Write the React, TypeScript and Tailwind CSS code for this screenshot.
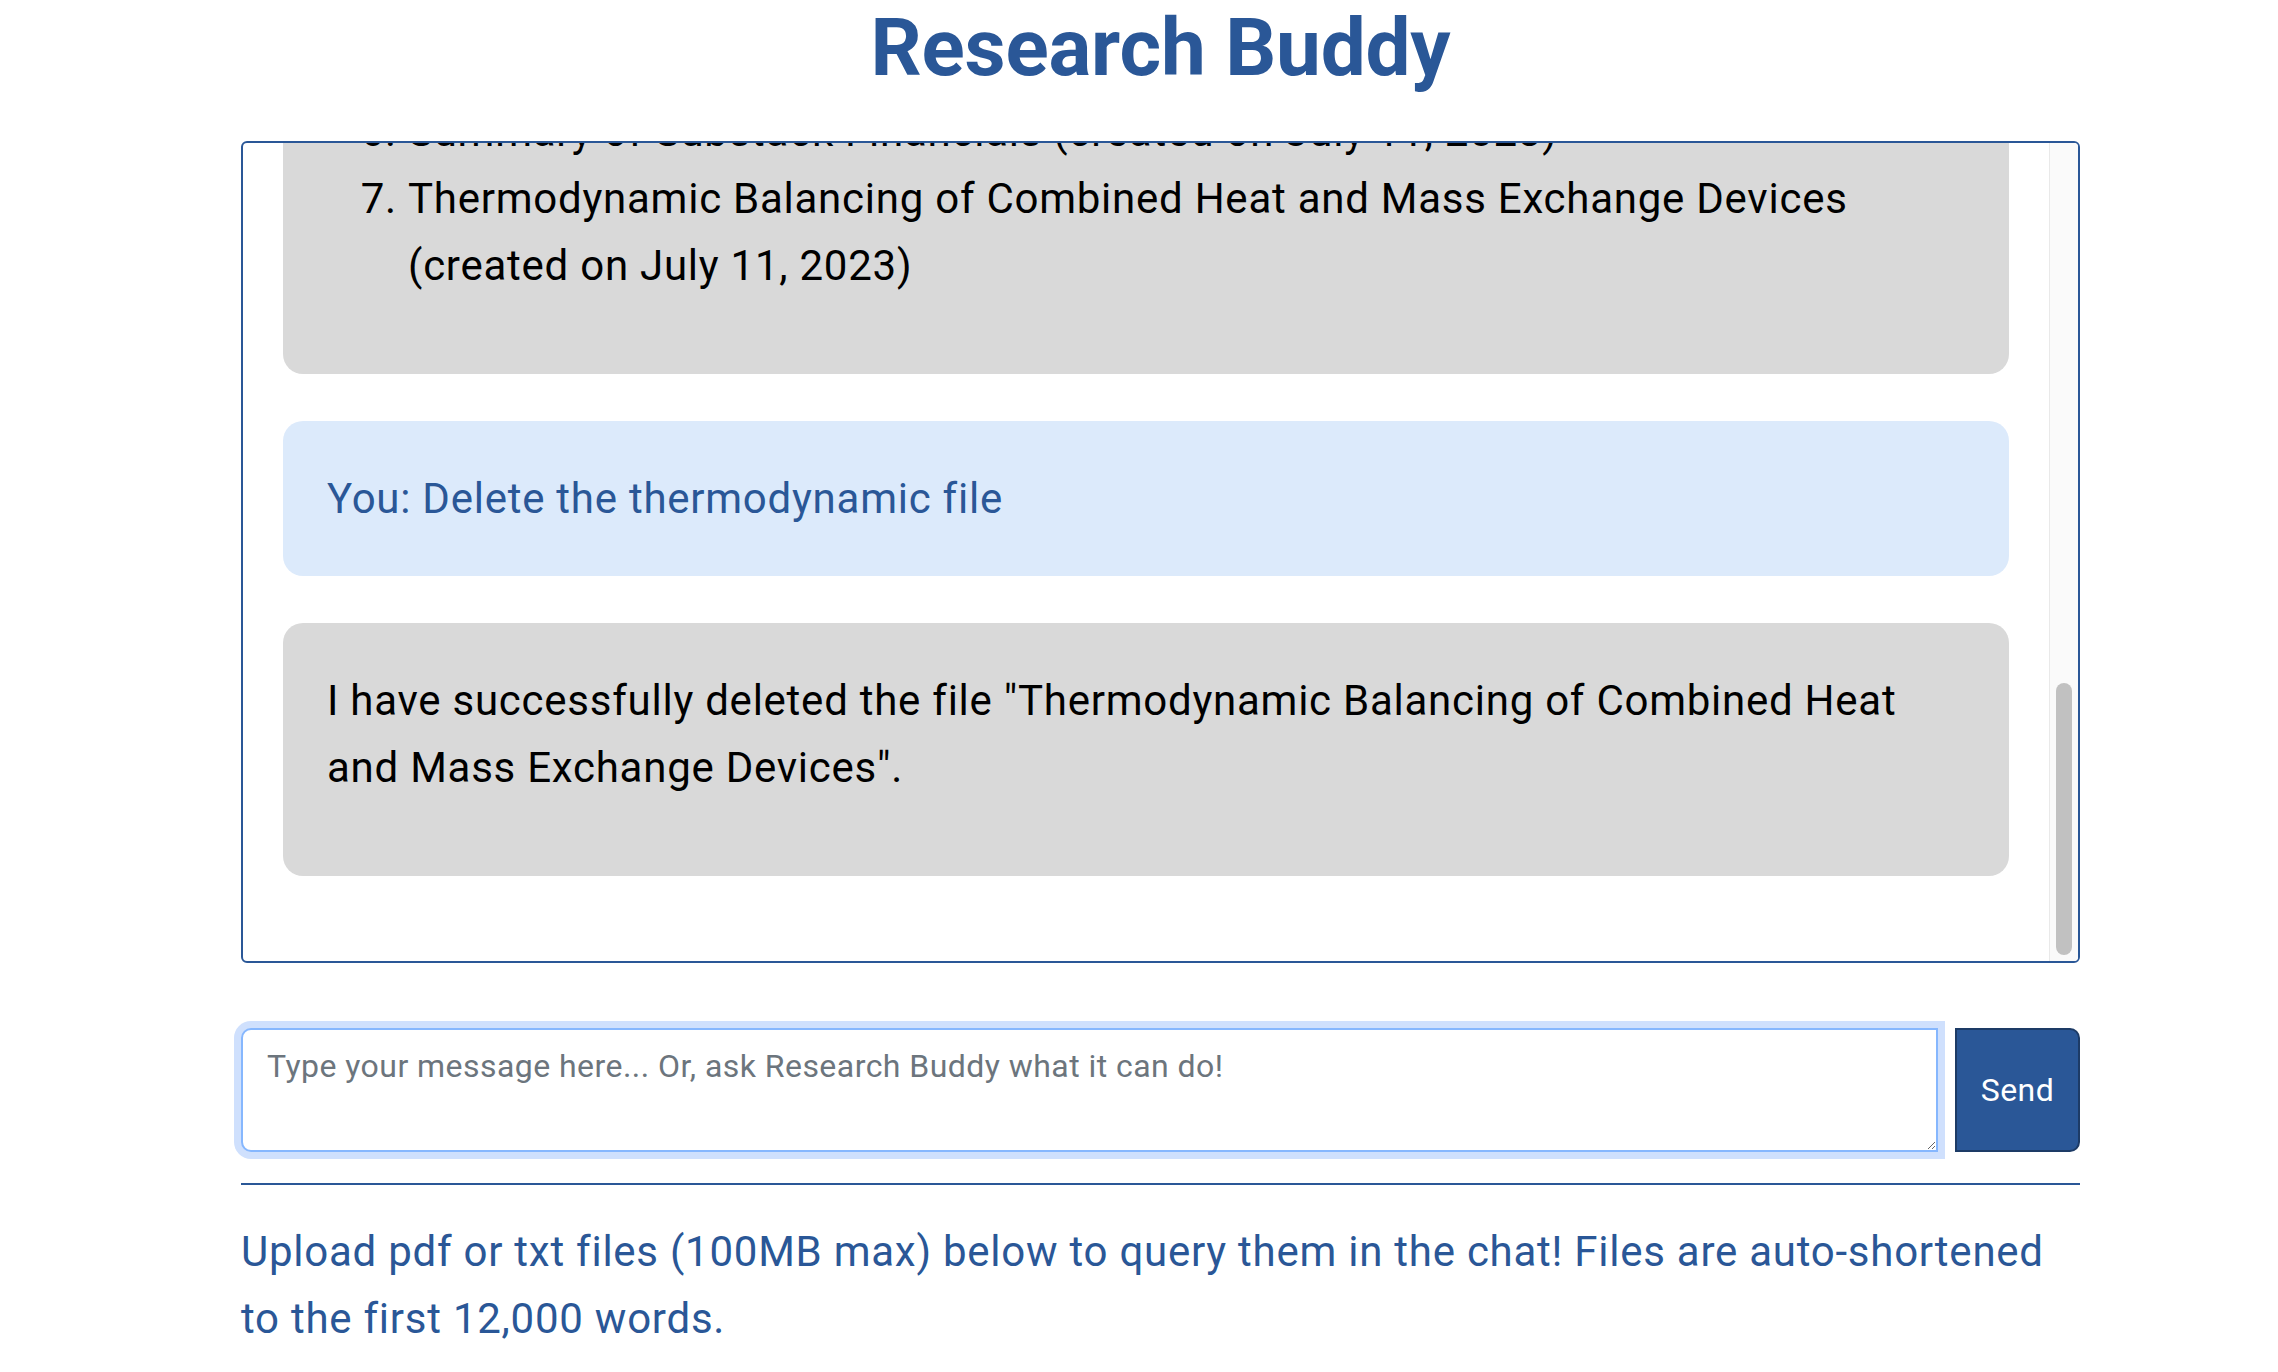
const BLUE = '#2a5797';

const ChatBox = () => {
  return (
    <div className="flex h-[822px] overflow-hidden rounded-[6px] border-2 border-[#2a5797]">
      {/* messages, pinned to the bottom like a scrolled chat */}
      <div className="flex flex-1 flex-col justify-end gap-[47px] overflow-hidden px-[40px] pb-[85px]">
        <div className="shrink-0 rounded-[20px] bg-[#d9d9d9] px-[44px] pt-[44px] pb-[44px] text-[42px] leading-[67px] tracking-[0.75px] text-black">
          <ol start={6} className="mb-[31px] list-decimal pl-[81px]">
            <li>Summary of Substack Financials (created on July 11, 2023)</li>
            <li>
              Thermodynamic Balancing of Combined Heat and Mass Exchange Devices (created on July 11, 2023)
            </li>
          </ol>
        </div>

        <div className="shrink-0 rounded-[20px] bg-[#dceafb] px-[44px] py-[44px] text-[42px] leading-[67px] tracking-[0.75px] text-[#2a5797]">
          You: Delete the thermodynamic file
        </div>

        <div className="shrink-0 rounded-[20px] bg-[#d9d9d9] px-[44px] pt-[44px] pb-[44px] text-[42px] leading-[67px] tracking-[0.75px] text-black">
          <p className="mb-[31px]">
            I have successfully deleted the file "Thermodynamic Balancing of Combined Heat and Mass Exchange Devices".
          </p>
        </div>
      </div>

      {/* scrollbar */}
      <div className="flex w-[29px] shrink-0 flex-col justify-end border-l border-[#e9e9e9] bg-[#fafafa] pb-[6px]">
        <div className="mx-auto h-[272px] w-[16px] rounded-full bg-[#c1c1c1]" />
      </div>
    </div>
  );
};

export default function App() {
  return (
    <div className="min-h-screen bg-white font-['Roboto','Liberation_Sans',sans-serif]">
      <div className="ml-[241px] w-[1839px] pb-[40px]">
        <h1 className="mb-[45px] text-center text-[80px] font-bold leading-[96px] tracking-[-0.2px]" style={{ color: BLUE }}>
          Research Buddy
        </h1>

        <ChatBox />

        <div className="mt-[65px] flex gap-[17px]">
          <textarea
            placeholder="Type your message here... Or, ask Research Buddy what it can do!"
            className="h-[124px] flex-1 rounded-l-[10px] rounded-r-none border-2 border-[#86b7fe] bg-white px-[24px] py-[12px] text-[32px] leading-[48px] tracking-[0.45px] text-[#212529] shadow-[0_0_0_7px_#cfe0fd] outline-none placeholder:text-[#6c757d]"
          />
          <button className="h-[124px] w-[125px] rounded-l-none rounded-r-[10px] border-2 border-[#1d3b66] bg-[#2a5797] text-[32px] tracking-[0.4px] text-white">
            Send
          </button>
        </div>

        <div className="mt-[31px] h-[2px] bg-[#2a5797]" />

        <p className="mt-[33px] text-[42px] leading-[67px] tracking-[0.75px] text-[#2a5797]">
          Upload pdf or txt files (100MB max) below to query them in the chat! Files are auto-shortened to the first 12,000 words.
        </p>
      </div>
    </div>
  );
}
